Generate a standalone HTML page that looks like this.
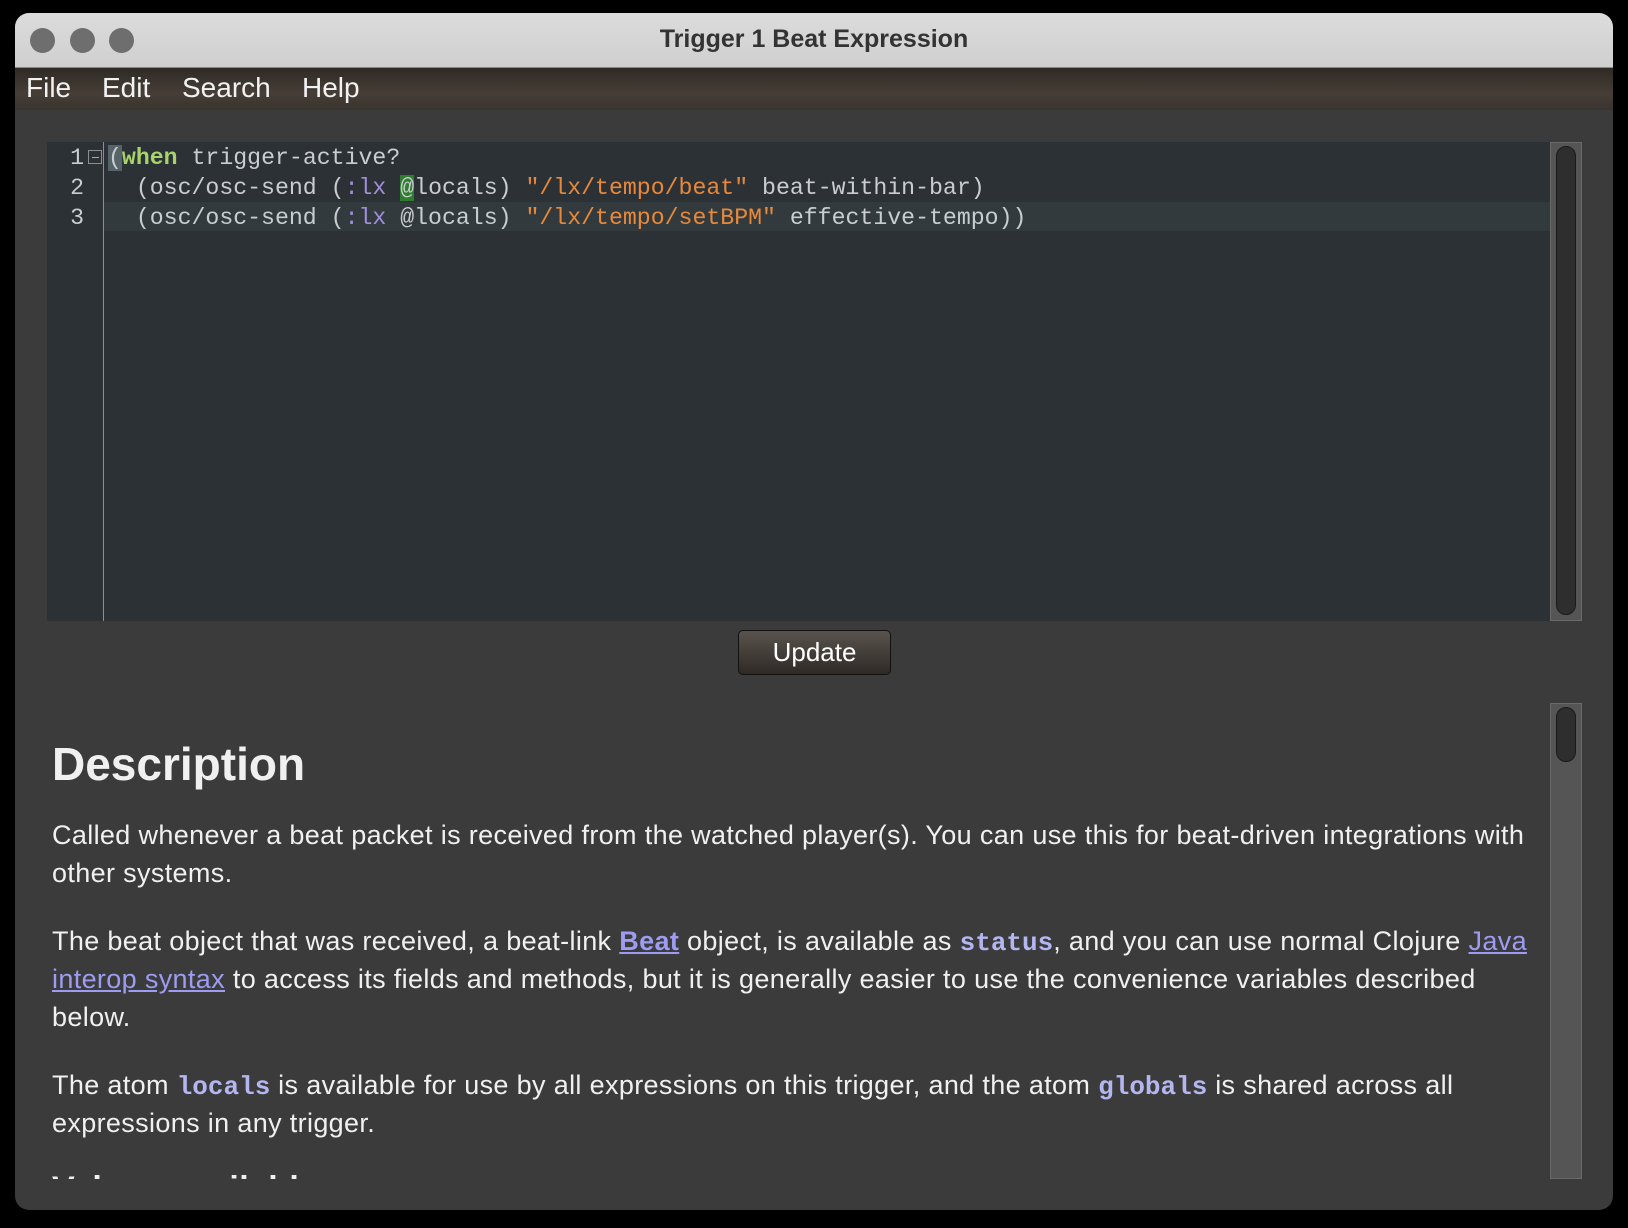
<!DOCTYPE html>
<html><head><meta charset="utf-8"><style>
*{margin:0;padding:0;box-sizing:border-box}
body{width:1628px;height:1228px;background:#000;position:relative;overflow:hidden;font-family:"Liberation Sans",sans-serif}
.win{position:absolute;left:15px;top:13px;width:1598px;height:1197px;border-radius:14px;overflow:hidden;background:#3b3b3b}
.title{position:absolute;left:0;top:0;width:100%;height:55px;background:linear-gradient(#dcdcdc,#cfcfcf);border-bottom:1px solid #888}
.tl{position:absolute;top:15px;width:25px;height:25px;border-radius:50%;background:#6e6e6e}
.title .t{position:absolute;left:0;width:100%;top:12px;text-align:center;font-weight:bold;font-size:25px;color:#333}
.menu{position:absolute;left:0;top:55px;width:100%;height:42px;background:linear-gradient(#2f2a26,#463e36 60%,#3a342f)}
.menu span{position:absolute;top:4px;font-size:28px;color:#f2f2f2}
.ed{position:absolute;left:32px;top:129px;width:1503px;height:479px;background:#2c3136}
.gut{position:absolute;left:56px;top:0;width:1px;height:100%;background:#8a8f94}
.hl{position:absolute;left:57px;top:60px;right:0;height:29px;background:#323a3e}
.code{position:absolute;left:0;top:0;font-family:"Liberation Mono",monospace;font-size:23.2px;line-height:30px;color:#c9cdd0;white-space:pre}
.ln{position:absolute;left:17px;width:20px;text-align:right}
.cl{position:absolute;left:61px}
.kw{color:#a8d36a;font-weight:bold}.s{color:#e8893a}.k{color:#a08fd8}
.sb{position:absolute;left:1535px;top:129px;width:32px;height:479px;background:#555;border:1px solid #6a6a6a}
.th{position:absolute;left:5px;top:3px;width:20px;height:469px;border-radius:10px;background:#2e2e2e;border:1px solid #1a1a1a}
.btn{position:absolute;left:723px;top:617px;width:153px;height:45px;border-radius:5px;background:linear-gradient(#5a534d,#2f2a26);border:1px solid #111;color:#fff;font-size:26px;text-align:center;line-height:43px}
.doc{position:absolute;left:37px;top:690px;color:#f0f0f0}
.doc h1{position:absolute;left:0;top:34px;font-size:46px;white-space:nowrap}
.doc p{position:absolute;left:0;font-size:27px;line-height:38px;white-space:nowrap;letter-spacing:0.35px}
a{color:#9d9cf2;text-decoration:underline}
code{font-family:"Liberation Mono",monospace;font-weight:bold;color:#b4b6f0;font-size:26px;letter-spacing:0}
.sb2{position:absolute;left:1535px;top:690px;width:32px;height:476px;background:#555;border:1px solid #6a6a6a}
.th2{position:absolute;left:5px;top:3px;width:20px;height:55px;border-radius:10px;background:#2e2e2e;border:1px solid #1a1a1a}
</style></head><body>
<div class="win">
 <div class="title">
  <div class="tl" style="left:15px"></div><div class="tl" style="left:55px"></div><div class="tl" style="left:94px"></div>
  <div class="t">Trigger 1 Beat Expression</div>
 </div>
 <div class="menu"><span style="left:11px">File</span><span style="left:87px">Edit</span><span style="left:167px">Search</span><span style="left:287px">Help</span></div>
 <div class="ed">
  <div class="hl"></div>
  <div class="gut"></div>
  <div class="code">
   <div class="ln" style="top:1px">1</div><div style="position:absolute;left:41px;top:8px;width:14px;height:14px;border:1px solid #8a8f94;"><div style="position:absolute;left:3px;top:6px;width:7px;height:1px;background:#aaa"></div></div>
   <div class="ln" style="top:31px">2</div>
   <div class="ln" style="top:61px">3</div>
   <div class="cl" style="top:1px"><span style="background:#56646a">(</span><span class="kw">when</span> trigger-active?</div>
   <div class="cl" style="top:31px">  (osc/osc-send (<span class="k">:lx</span> <span style="background:#2f7d2f">@</span>locals) <span class="s">"/lx/tempo/beat"</span> beat-within-bar)</div>
   <div class="cl" style="top:61px">  (osc/osc-send (<span class="k">:lx</span> @locals) <span class="s">"/lx/tempo/setBPM"</span> effective-tempo))</div>
  </div>
 </div>
 <div class="sb"><div class="th"></div></div>
 <div class="btn">Update</div>
 <div class="doc">
  <h1>Description</h1>
  <p style="top:113px">Called whenever a beat packet is received from the watched player(s). You can use this for beat-driven integrations with</p>
  <p style="top:151px">other systems.</p>
  <p style="top:219px">The beat object that was received, a beat-link <a><b>Beat</b></a> object, is available as <code>status</code>, and you can use normal Clojure <a>Java</a></p>
  <p style="top:257px"><a>interop syntax</a> to access its fields and methods, but it is generally easier to use the convenience variables described</p>
  <p style="top:295px">below.</p>
  <p style="top:363px">The atom <code>locals</code> is available for use by all expressions on this trigger, and the atom <code>globals</code> is shared across all</p>
  <p style="top:401px">expressions in any trigger.</p>
  <p style="top:466px;height:10px;overflow:hidden;font-weight:bold;font-size:34px;line-height:40px">Values available</p>
 </div>
 <div class="sb2"><div class="th2"></div></div>
</div>
</body></html>
